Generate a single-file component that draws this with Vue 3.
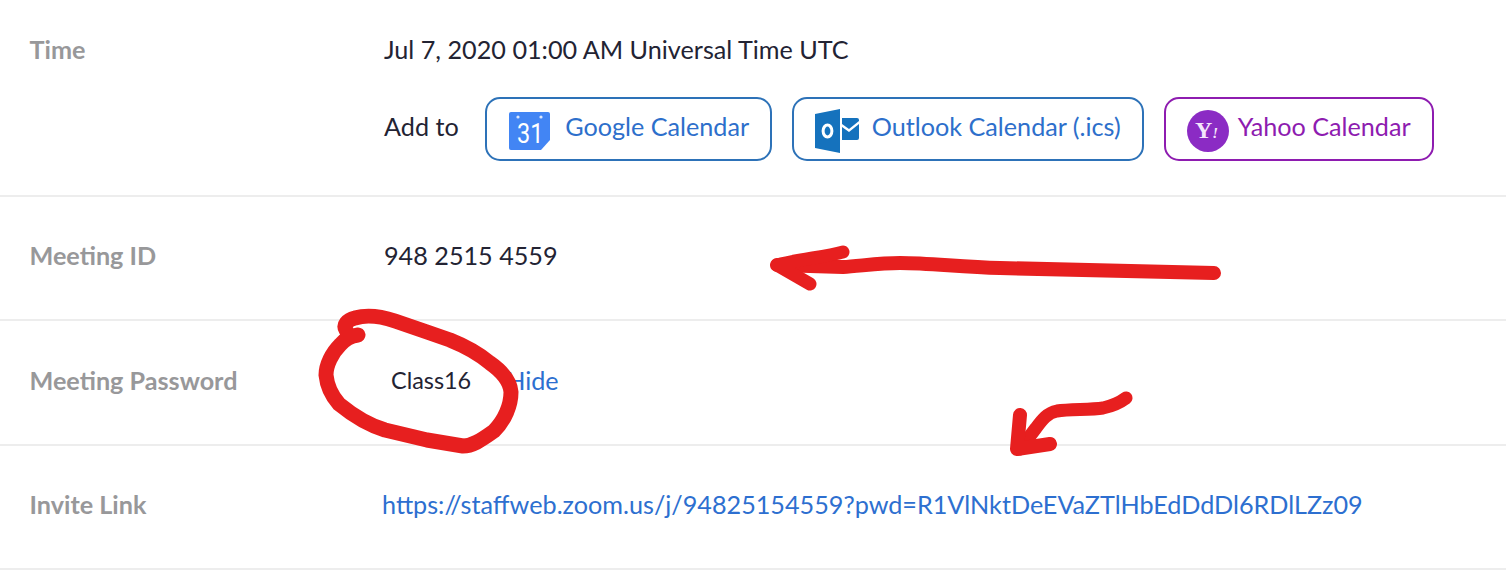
<template>
  <div class="page">
    <section class="row row-time">
      <div class="label">Time</div>
      <div class="value">
        <div class="time-line">Jul 7, 2020 01:00 AM Universal Time UTC</div>
        <div class="add-line">
          <span class="add-to">Add to</span>
          <a class="cal-btn cal-google">
            <svg class="ico" width="42" height="38" viewBox="0 0 42 38">
              <path d="M2 0h37a2 2 0 0 1 2 2v26l-9 10H2a2 2 0 0 1-2-2V2a2 2 0 0 1 2-2z" fill="#4285f4" />
              <circle cx="9" cy="5" r="1.6" fill="#dbe7fd" />
              <circle cx="32" cy="5" r="1.6" fill="#dbe7fd" />
              <text class="g-num" transform="translate(8 31) scale(.84 1)">31</text>
            </svg>
            <span>Google Calendar</span>
          </a>
          <a class="cal-btn cal-outlook">
            <svg class="ico" width="44" height="44" viewBox="0 0 44 44">
              <path d="M0 5 25 0v44L0 39z" fill="#1572bd" />
              <path d="M27 9h15a2 2 0 0 1 2 2v1L34 20 27 15z" fill="#1572bd" />
              <path d="M27 18l7 5 10-8v14a2 2 0 0 1-2 2H27z" fill="#1572bd" />
              <ellipse cx="12.5" cy="22" rx="4.4" ry="6" fill="none" stroke="#fff" stroke-width="3" />
            </svg>
            <span>Outlook Calendar (.ics)</span>
          </a>
          <a class="cal-btn cal-yahoo">
            <svg class="ico" width="42" height="42" viewBox="0 0 42 42">
              <circle cx="21" cy="21" r="21" fill="#8b2bc4" />
              <text x="8" y="28" class="y-mark">Y<tspan class="y-bang">!</tspan></text>
            </svg>
            <span>Yahoo Calendar</span>
          </a>
        </div>
      </div>
    </section>

    <section class="row">
      <div class="label">Meeting ID</div>
      <div class="value">948 2515 4559</div>
    </section>

    <section class="row">
      <div class="label">Meeting Password</div>
      <div class="value pwd">
        <span class="pwd-text">Class16</span>
        <a class="link">Hide</a>
      </div>
    </section>

    <section class="row">
      <div class="label">Invite Link</div>
      <div class="value">
        <a class="link invite">https://staffweb.zoom.us/j/94825154559?pwd=R1VlNktDeEVaZTlHbEdDdDl6RDlLZz09</a>
      </div>
    </section>

    <!-- red marker scribbles drawn over the page -->
    <svg class="scribble" width="1506" height="585" viewBox="0 0 1506 585">
      <g fill="none" stroke="#e71f1f" stroke-linecap="round" stroke-linejoin="round">
        <path stroke-width="14" d="M1214 273 1000 268C960 267 930 263 900 263 880 263 860 266 843 267L777 265" />
        <path stroke-width="13" d="M843 252C825 257 800 259 777 265L810 284" />
        <path stroke-width="15" d="M358 335C350 336 345 339 340 345 332 353 326 365 326 375 327 385 331 395 339 404 350 413 365 424 385 430L427 440 463 446C472 446 480 441 494 431 505 420 511 405 511 392 510 380 500 370 490 363 478 353 465 346 450 340L427 332 395 321C380 316 365 315 355 318 347 320 343 325 346 330" />
        <path stroke-width="13" d="M1126 398C1118 404 1112 406 1103 408 1090 410 1070 409 1057 411 1047 413 1042 420 1036 428L1020 449" />
        <path stroke-width="14" d="M1020 415 1017 449 1050 444" />
      </g>
    </svg>
  </div>
</template>

<script setup>
</script>

<style>
body {
  background: #fff;
}
</style>

<style scoped>
.page {
  position: relative;
  width: 1506px;
  height: 585px;
  overflow: hidden;
  background: #fff;
  font-family: Lato, "Noto Sans", sans-serif;
  font-size: 25.2px;
  color: #232333;
}
.row {
  display: grid;
  grid-template-columns: 354.5px 1fr;
  align-items: center;
  box-sizing: border-box;
  height: 124.4px;
  padding-left: 29.5px;
  padding-bottom: 6px;
  border-bottom: 2px solid #ededed;
}
.row-time {
  align-items: start;
  height: auto;
  padding-top: 29px;
  padding-bottom: 34px;
}
.label {
  font-weight: 700;
  color: #98989a;
  line-height: 40px;
}
.time-line {
  line-height: 40px;
}
.add-line {
  display: flex;
  align-items: center;
  margin-top: 28px;
}
.add-to {
  margin-right: 26px;
  padding-bottom: 6px;
}
.cal-btn {
  display: flex;
  align-items: center;
  justify-content: center;
  box-sizing: border-box;
  height: 64px;
  margin-right: 20px;
  padding-bottom: 6px;
  border: 2px solid #2d72b8;
  border-radius: 15px;
  color: #2d6fcb;
}
.ico {
  margin-top: 10px;
}
.cal-google {
  width: 287px;
  padding-left: 2px;
  gap: 14px;
}
.cal-outlook {
  width: 352px;
  gap: 13px;
}
.cal-yahoo {
  width: 270px;
  gap: 9px;
  border-color: #8e1cb0;
  color: #8e1cb0;
}
.g-num {
  font-family: Roboto, sans-serif;
  font-size: 28px;
  font-weight: 400;
  fill: #fff;
}
.y-mark {
  font-family: "Liberation Serif", serif;
  font-size: 24px;
  font-weight: 700;
  fill: #f4e6fb;
}
.y-bang {
  font-size: 15px;
  font-style: italic;
}
.pwd {
  display: flex;
  align-items: center;
}
.pwd-text {
  margin-left: 7px;
  font-size: 23.4px;
}
.link {
  color: #2d6fd0;
}
.pwd .link {
  margin-left: 35px;
}
.invite {
  margin-left: -2px;
}
.scribble {
  position: absolute;
  top: 0;
  left: 0;
  pointer-events: none;
}
</style>
